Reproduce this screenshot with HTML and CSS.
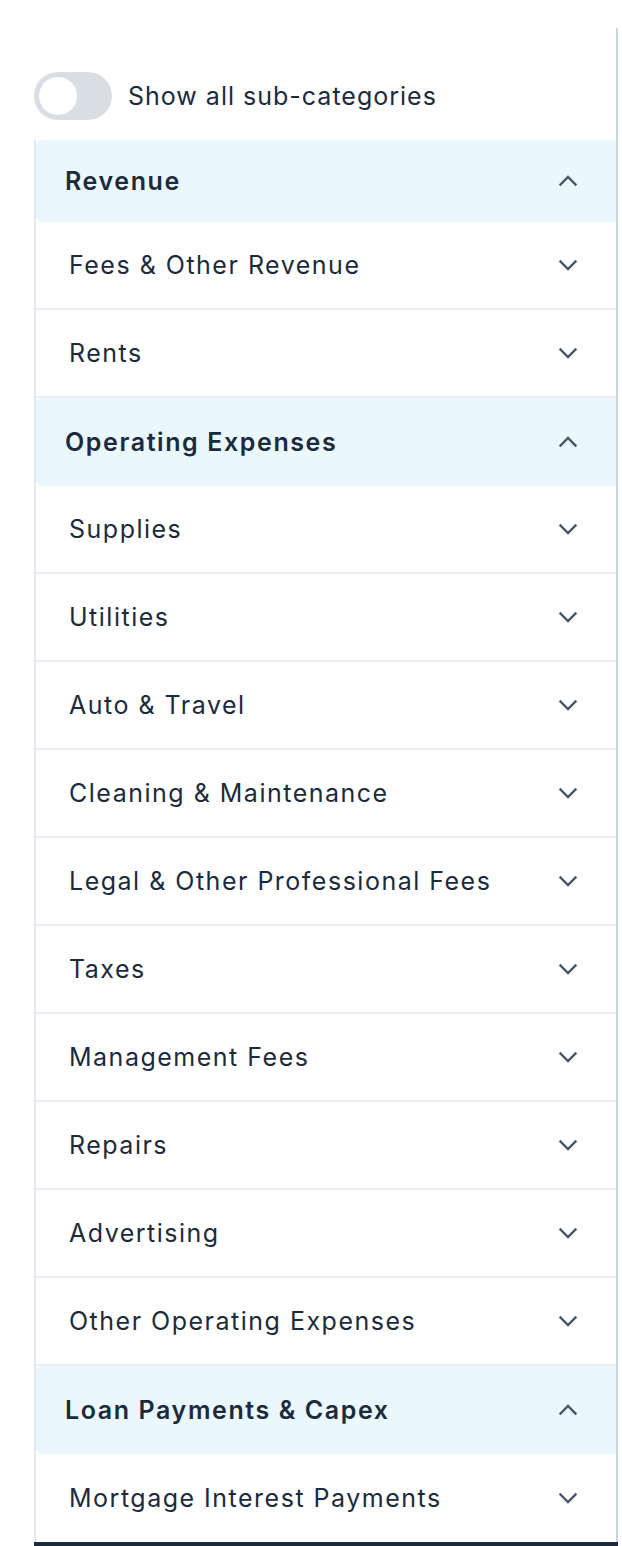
FILE: index.html
```html
<!DOCTYPE html>
<html lang="en">
<head>
<meta charset="utf-8">
<title>Categories</title>
<link rel="stylesheet" href="styles.css">
</head>
<body>
<div class="panel">
  <div class="toggle-row">
    <span class="switch"><span class="knob"></span></span>
    <span class="toggle-label">Show all sub-categories</span>
  </div>
  <ul class="list">
    <li class="row head first"><span>Revenue</span><svg class="chev" viewBox="0 0 20 20"><path d="M2.5 13.5 L10 6 L17.5 13.5"/></svg></li>
    <li class="row sub"><span>Fees &amp; Other Revenue</span><svg class="chev" viewBox="0 0 20 20"><path d="M2.5 6.5 L10 14 L17.5 6.5"/></svg></li>
    <li class="row sub"><span>Rents</span><svg class="chev" viewBox="0 0 20 20"><path d="M2.5 6.5 L10 14 L17.5 6.5"/></svg></li>
    <li class="row head"><span>Operating Expenses</span><svg class="chev" viewBox="0 0 20 20"><path d="M2.5 13.5 L10 6 L17.5 13.5"/></svg></li>
    <li class="row sub"><span>Supplies</span><svg class="chev" viewBox="0 0 20 20"><path d="M2.5 6.5 L10 14 L17.5 6.5"/></svg></li>
    <li class="row sub"><span>Utilities</span><svg class="chev" viewBox="0 0 20 20"><path d="M2.5 6.5 L10 14 L17.5 6.5"/></svg></li>
    <li class="row sub"><span>Auto &amp; Travel</span><svg class="chev" viewBox="0 0 20 20"><path d="M2.5 6.5 L10 14 L17.5 6.5"/></svg></li>
    <li class="row sub"><span>Cleaning &amp; Maintenance</span><svg class="chev" viewBox="0 0 20 20"><path d="M2.5 6.5 L10 14 L17.5 6.5"/></svg></li>
    <li class="row sub"><span>Legal &amp; Other Professional Fees</span><svg class="chev" viewBox="0 0 20 20"><path d="M2.5 6.5 L10 14 L17.5 6.5"/></svg></li>
    <li class="row sub"><span>Taxes</span><svg class="chev" viewBox="0 0 20 20"><path d="M2.5 6.5 L10 14 L17.5 6.5"/></svg></li>
    <li class="row sub"><span>Management Fees</span><svg class="chev" viewBox="0 0 20 20"><path d="M2.5 6.5 L10 14 L17.5 6.5"/></svg></li>
    <li class="row sub"><span>Repairs</span><svg class="chev" viewBox="0 0 20 20"><path d="M2.5 6.5 L10 14 L17.5 6.5"/></svg></li>
    <li class="row sub"><span>Advertising</span><svg class="chev" viewBox="0 0 20 20"><path d="M2.5 6.5 L10 14 L17.5 6.5"/></svg></li>
    <li class="row sub"><span>Other Operating Expenses</span><svg class="chev" viewBox="0 0 20 20"><path d="M2.5 6.5 L10 14 L17.5 6.5"/></svg></li>
    <li class="row head"><span>Loan Payments &amp; Capex</span><svg class="chev" viewBox="0 0 20 20"><path d="M2.5 13.5 L10 6 L17.5 13.5"/></svg></li>
    <li class="row sub last"><span>Mortgage Interest Payments</span><svg class="chev" viewBox="0 0 20 20"><path d="M2.5 6.5 L10 14 L17.5 6.5"/></svg></li>
  </ul>
  <div class="bottom-bar"></div>
</div>
</body>
</html>
```

FILE: styles.css
```css
html, body {
  margin: 0;
  padding: 0;
  background: #ffffff;
}
body {
  font-family: Inter, "Liberation Sans", sans-serif;
  color: #1c2b3c;
  overflow: hidden;
}
.panel {
  width: 616px;
  margin-top: 28px;
  border-right: 2px solid #cbd3de;
  min-height: 1540px;
}
.toggle-row {
  display: flex;
  align-items: center;
  gap: 16px;
  padding: 44px 0 0 34px;
  height: 48px;
}
.switch {
  width: 78px;
  height: 48px;
  border-radius: 24px;
  background: #d9dee5;
  display: flex;
  align-items: center;
  padding-left: 5px;
  box-sizing: border-box;
}
.knob {
  width: 38px;
  height: 38px;
  border-radius: 50%;
  background: #ffffff;
}
.toggle-label {
  font-size: 25px;
  letter-spacing: 1px;
}
.list {
  list-style: none;
  margin: 20px 0 0 34px;
  padding: 0;
  border-left: 2px solid #e4e9ef;
}
.row {
  display: flex;
  align-items: center;
  justify-content: space-between;
  height: 88px;
  box-sizing: border-box;
  font-size: 25px;
  padding-right: 38px;
}
.head {
  background: #eaf7fd;
  font-weight: 600;
  padding-left: 29px;
  letter-spacing: 1.6px;
  border-radius: 6px 0 0 6px;
}
.head.first {
  height: 82px;
}
.sub {
  padding-left: 33px;
  letter-spacing: 1.5px;
  border-bottom: 2px solid #e8edf2;
}
.sub.last {
  border-bottom: none;
}
.chev {
  width: 20px;
  height: 20px;
  fill: none;
  stroke: #4a5567;
  stroke-width: 2.4;
  stroke-linecap: square;
  stroke-linejoin: miter;
}
.bottom-bar {
  height: 6px;
  margin-left: 34px;
  margin-right: -2px;
  background: #1d2b3a;
}
```
